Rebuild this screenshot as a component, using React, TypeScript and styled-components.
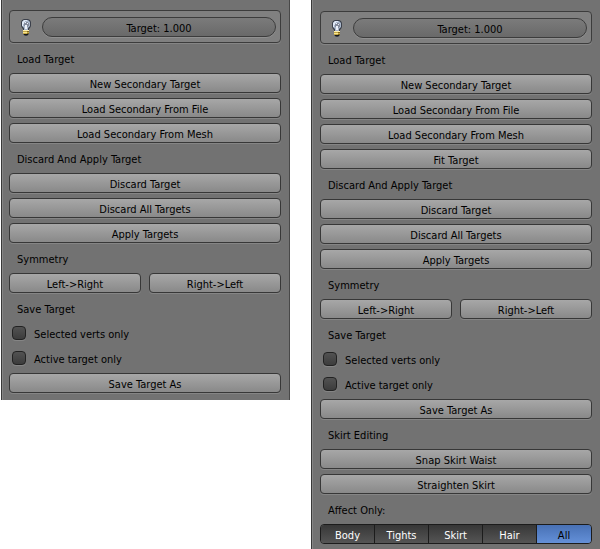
import React, { useState } from "react";
import styled, { createGlobalStyle, css } from "styled-components";

const GlobalStyle = createGlobalStyle`
  *, *::before, *::after { box-sizing: border-box; }
  body { margin: 0; background: #fff; }
  body, button, input { font-family: "DejaVu Sans Condensed", "DejaVu Sans", sans-serif; font-size: 11px; color: #000; }
`;

const Page = styled.main`
  display: grid;
  grid-template-columns: 1fr 1fr;
  column-gap: 20px;
  align-items: start;
  min-height: 100vh;
  overflow: hidden;
`;

const Panel = styled.section<{ $tall?: boolean }>`
  display: flex;
  flex-direction: column;
  gap: 5px;
  margin-left: 1px;
  padding: ${(p) => (p.$tall ? "11px 8px 5px 8px" : "10px 8px 7px 7px")};
  background: #727272;
  border-left: 1px solid #393939;
  box-shadow: inset 1px 0 #868686;
  ${(p) => !p.$tall && css`border-right: 1px solid #484848;`}
`;

const TargetBox = styled.div`
  display: flex;
  align-items: center;
  gap: 9px;
  height: 33px;
  padding: 0 4px 0 9px;
  background: #808080;
  border: 1px solid #3c3c3c;
  border-radius: 4px;
  box-shadow: 0 1px #858585;
`;

const Bulb = styled.svg`
  flex: none;
  width: 14px;
  height: 18px;
`;

const Slider = styled.button`
  flex: 1;
  height: 20px;
  padding: 4px 0 0;
  border: 1px solid #3c3c3c;
  border-radius: 10px;
  background: linear-gradient(#7b7b7b, #696969);
  box-shadow: 0 1px #909090;
  line-height: 14px;
`;

const Heading = styled.h2`
  margin: 0;
  padding: 2px 0 0 8px;
  height: 20px;
  font-size: 11px;
  font-weight: 400;
  line-height: 20px;
`;

const Row = styled.div`
  display: flex;
  gap: 8px;
`;

const Button = styled.button`
  flex: 1;
  height: 20px;
  padding: 4px 0 0;
  border: 1px solid #373737;
  border-radius: 4px;
  background: linear-gradient(#a7a7a7, #898989);
  box-shadow: 0 1px #858585;
  line-height: 14px;
`;

const CheckLabel = styled.label`
  display: flex;
  align-items: center;
  gap: 8px;
  height: 20px;
  padding-left: 3px;
`;

const Checkbox = styled.input`
  appearance: none;
  flex: none;
  width: 14px;
  height: 14px;
  margin: 0;
  border: 1px solid #222;
  border-radius: 4px;
  background: linear-gradient(#525252, #3c3c3c);
  box-shadow: 0 1px #858585;
  &:checked { background: #5680c2; }
`;

const CheckText = styled.span`
  padding-top: 4px;
  line-height: 16px;
`;

const Segments = styled.div`
  display: grid;
  grid-template-columns: repeat(5, 1fr);
  height: 20px;
  border: 1px solid #1c1c1c;
  border-radius: 4px;
  overflow: hidden;
`;

const Segment = styled.button<{ $active: boolean }>`
  padding: 4px 0 0;
  border: 0;
  border-right: 1px solid #1c1c1c;
  background: ${(p) => (p.$active ? "linear-gradient(#4871b5, #6490d8)" : "linear-gradient(#373737, #555)")};
  color: ${(p) => (p.$active ? "#000" : "#fff")};
  line-height: 14px;
  &:last-child { border-right: 0; }
`;

function BulbIcon() {
  return (
    <Bulb viewBox="0 0 14 18" aria-hidden="true">
      <path d="M5 1h4l2 1 1 2v4l-1 2-1 1v5l-2 2H6l-2-2v-5L3 10 2 8V4l1-2z" fill="#3b404b" />
      <path d="M5 2h4l2 2v4l-2 2v2H5v-2L3 8V4z" fill="#aab7cb" />
      <path d="M5 2h3v1H6v1H5v2H4v2H3V4z" fill="#dfe8f5" />
      <path d="M5 5h1V4h3v1h1v3H9v1H8V7H6v1H5z" fill="#858c9d" />
      <path d="M6 4h1v1H6zM8 5h1v1H8zM6 7h2v4H6z" fill="#edf2fa" />
      <path d="M4 12h6v1H4z" fill="#fff0b0" />
      <path d="M4 13h6v3H4z" fill="#c5aa45" />
      <path d="M4 14h4v1H4z" fill="#f8e694" />
      <path d="M8 13h2v1H8zM8 15h2v1H8z" fill="#806722" />
      <path d="M5 16h4v1H5z" fill="#17181b" />
    </Bulb>
  );
}

function Buttons({ labels }: { labels: string[] }) {
  return (
    <>
      {labels.map((label) => (
        <Row key={label}>
          <Button type="button">{label}</Button>
        </Row>
      ))}
    </>
  );
}

function Check({ label }: { label: string }) {
  return (
    <CheckLabel>
      <Checkbox type="checkbox" />
      <CheckText>{label}</CheckText>
    </CheckLabel>
  );
}

const parts = ["Body", "Tights", "Skirt", "Hair", "All"];

function TargetPanel({ skirt = false }: { skirt?: boolean }) {
  const [part, setPart] = useState("All");
  const load = ["New Secondary Target", "Load Secondary From File", "Load Secondary From Mesh"];
  return (
    <Panel $tall={skirt}>
      <TargetBox>
        <BulbIcon />
        <Slider type="button">Target: 1.000</Slider>
      </TargetBox>
      <Heading>Load Target</Heading>
      <Buttons labels={skirt ? [...load, "Fit Target"] : load} />
      <Heading>Discard And Apply Target</Heading>
      <Buttons labels={["Discard Target", "Discard All Targets", "Apply Targets"]} />
      <Heading>Symmetry</Heading>
      <Row>
        <Button type="button">{"Left->Right"}</Button>
        <Button type="button">{"Right->Left"}</Button>
      </Row>
      <Heading>Save Target</Heading>
      <Check label="Selected verts only" />
      <Check label="Active target only" />
      <Buttons labels={["Save Target As"]} />
      {skirt && (
        <>
          <Heading>Skirt Editing</Heading>
          <Buttons labels={["Snap Skirt Waist", "Straighten Skirt"]} />
          <Heading>Affect Only:</Heading>
          <Segments role="group" aria-label="Affect Only">
            {parts.map((p) => (
              <Segment key={p} type="button" $active={p === part} aria-pressed={p === part} onClick={() => setPart(p)}>
                {p}
              </Segment>
            ))}
          </Segments>
        </>
      )}
    </Panel>
  );
}

export default function App() {
  return (
    <>
      <GlobalStyle />
      <Page>
        <TargetPanel />
        <TargetPanel skirt />
      </Page>
    </>
  );
}
